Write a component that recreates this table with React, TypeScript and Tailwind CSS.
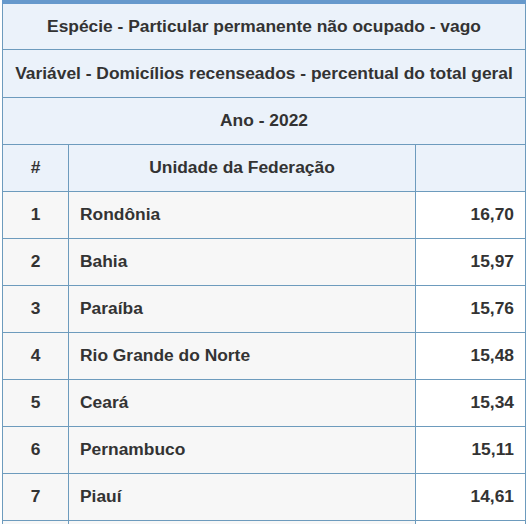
const rows = [
  { n: 1, uf: "Rondônia", v: "16,70" },
  { n: 2, uf: "Bahia", v: "15,97" },
  { n: 3, uf: "Paraíba", v: "15,76" },
  { n: 4, uf: "Rio Grande do Norte", v: "15,48" },
  { n: 5, uf: "Ceará", v: "15,34" },
  { n: 6, uf: "Pernambuco", v: "15,11" },
  { n: 7, uf: "Piauí", v: "14,61" },
];

export default function App() {
  return (
    <div className="h-[524px] w-[532px] overflow-hidden bg-white pl-[2px] font-['Liberation_Sans',Arial,sans-serif] text-[17.4px] font-bold text-[#333]">
      <table className="w-[523px] table-fixed border-collapse border-t-4 border-t-[#6699cc]">
        <colgroup>
          <col className="w-[66px]" />
          <col className="w-[347px]" />
          <col className="w-[110px]" />
        </colgroup>
        <thead className="bg-[#ebf2fa]">
          <tr className="h-[47px]">
            <th colSpan={3} className="border border-t-0 border-[#6d9bbd] text-center font-bold">
              Espécie - Particular permanente não ocupado - vago
            </th>
          </tr>
          <tr className="h-[48px]">
            <th colSpan={3} className="border border-[#6d9bbd] text-center font-bold">
              Variável - Domicílios recenseados - percentual do total geral
            </th>
          </tr>
          <tr className="h-[47px]">
            <th colSpan={3} className="border border-[#6d9bbd] text-center font-bold">
              Ano - 2022
            </th>
          </tr>
          <tr className="h-[47px]">
            <th className="border border-[#6d9bbd] text-center font-bold">#</th>
            <th className="border border-[#6d9bbd] text-center font-bold">Unidade da Federação</th>
            <th className="border border-[#6d9bbd]"></th>
          </tr>
        </thead>
        <tbody>
          {rows.map((r) => (
            <tr key={r.n} className="h-[47px]">
              <td className="border border-[#6d9bbd] bg-[#f7f7f7] text-center">{r.n}</td>
              <td className="border border-[#6d9bbd] bg-[#f7f7f7] pl-[11px] text-left">{r.uf}</td>
              <td className="border border-[#6d9bbd] bg-white pr-[11px] text-right">{r.v}</td>
            </tr>
          ))}
          <tr className="h-[47px]">
            <td className="border border-[#6d9bbd] bg-[#f7f7f7]"></td>
            <td className="border border-[#6d9bbd] bg-[#f7f7f7]"></td>
            <td className="border border-[#6d9bbd] bg-white"></td>
          </tr>
        </tbody>
      </table>
    </div>
  );
}
